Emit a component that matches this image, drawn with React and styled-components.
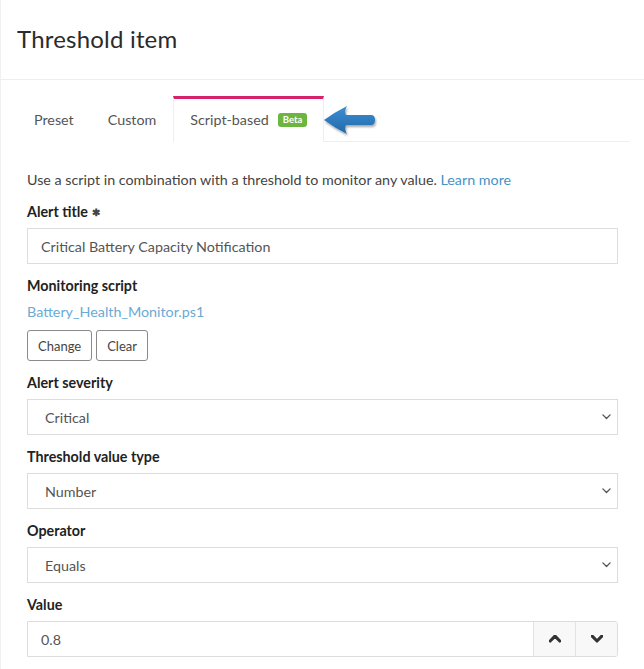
import React from "react";
import styled, { createGlobalStyle } from "styled-components";

const Global = createGlobalStyle`
  html, body { margin: 0; padding: 0; background: #fff; }
  body { font-family: "Lato", "Open Sans", sans-serif; color: #333; }
  * { box-sizing: border-box; }
`;

const Page = styled.div`
  width: 644px;
  height: 669px;
  border-left: 1px solid #f1f1f1;
  overflow: hidden;
  display: flex;
  flex-direction: column;
`;

const Header = styled.header`
  height: 82px;
  border-bottom: 1px solid #eeeeee;
  padding: 24px 16px 0 16px;
`;

const Title = styled.h1`
  margin: 0;
  font-size: 24px;
  font-weight: 400;
  line-height: 30px;
  color: #2b2b2b;
  letter-spacing: 0.2px;
`;

const Body = styled.div`
  padding: 16px 15px 0 16px;
`;

const TabList = styled.div`
  display: flex;
  align-items: stretch;
  border-bottom: 1px solid #eeeeee;
  height: 46px;
`;

const Tab = styled.div`
  position: relative;
  display: flex;
  align-items: center;
  gap: 9px;
  padding: 0 16px 2px 16px;
  font-size: 14.3px;
  color: #555;
  border-top: 3px solid ${(p) => (p.$active ? "#d6216b" : "transparent")};
  border-left: 1px solid ${(p) => (p.$active ? "#eeeeee" : "transparent")};
  border-right: 1px solid ${(p) => (p.$active ? "#eeeeee" : "transparent")};
  margin-bottom: -1px;
  background: #fff;
`;

const Badge = styled.span`
  display: inline-block;
  background: #6cb53f;
  color: #fff;
  font-size: 9.5px;
  font-weight: 700;
  line-height: 14px;
  padding: 0 5px;
  border-radius: 3px;
`;

const Arrow = styled.svg`
  position: absolute;
  left: 100%;
  top: 5px;
  overflow: visible;
`;

const Content = styled.div`
  padding: 28px 11px 0 10px;
  display: flex;
  flex-direction: column;
`;

const Description = styled.p`
  margin: 0 0 12px;
  font-size: 14.3px;
  line-height: 20px;
  color: #444;
`;

const Link = styled.a`
  color: ${(p) => (p.$light ? "#6aaad5" : "#4593c5")};
  text-decoration: none;
  cursor: pointer;
`;

const Field = styled.div`
  display: flex;
  flex-direction: column;
  margin-bottom: 12px;
`;

const Label = styled.div`
  font-size: 14.3px;
  font-weight: 700;
  line-height: 20px;
  color: #222;
  margin-bottom: 6px;
  display: flex;
  align-items: center;
  gap: 4px;
`;

const Req = styled.span`
  font-size: 10px;
  color: #444;
`;

const TextInput = styled.div`
  height: 36px;
  border: 1px solid #dddddd;
  display: flex;
  align-items: center;
  padding-left: 13px;
  font-size: 14.3px;
  color: #555;
  background: #fff;
`;

const FileName = styled.div`
  font-size: 14.3px;
  line-height: 20px;
  margin-bottom: 8px;
`;

const ButtonRow = styled.div`
  display: flex;
  gap: 4px;
`;

const Button = styled.button`
  height: 31px;
  padding: 0 10px;
  font-family: inherit;
  font-size: 13px;
  color: #444;
  background: #fff;
  border: 1px solid #8a8a8a;
  border-radius: 3px;
`;

const SelectBox = styled.div`
  position: relative;
  height: 36px;
  border: 1px solid #dddddd;
  display: flex;
  align-items: center;
  justify-content: space-between;
  padding: 0 6px 0 17px;
  font-size: 14.3px;
  color: #555;
  background: #fff;
`;

const NumberBox = styled.div`
  display: flex;
  height: 36px;
  border: 1px solid #dddddd;
  border-radius: 0 3px 3px 0;
  overflow: hidden;
`;

const NumberValue = styled.div`
  flex: 1;
  display: flex;
  align-items: center;
  padding-left: 13px;
  font-size: 14.3px;
  color: #555;
`;

const SpinButton = styled.div`
  width: 42px;
  display: flex;
  align-items: center;
  justify-content: center;
  background: #f8f8f8;
  border-left: 1px solid #e2e2e2;
  color: #333;
`;

const Chevron = ({ up, size = 10, stroke = 1.6, color = "#666" }) => (
  <svg width={size} height={size * 0.6} viewBox="0 0 10 6">
    <path
      d={up ? "M1 5 L5 1 L9 5" : "M1 1 L5 5 L9 1"}
      fill="none"
      stroke={color}
      strokeWidth={stroke}
      strokeLinecap="round"
      strokeLinejoin="round"
    />
  </svg>
);

const Select = ({ value }) => (
  <SelectBox>
    <span>{value}</span>
    <Chevron size={9} stroke={1.5} color="#555" />
  </SelectBox>
);

export default function App() {
  return (
    <>
      <Global />
      <Page>
        <Header>
          <Title>Threshold item</Title>
        </Header>
        <Body>
          <TabList>
            <Tab>Preset</Tab>
            <Tab>Custom</Tab>
            <Tab $active>
              Script-based <Badge>Beta</Badge>
              <Arrow width="54" height="32" viewBox="0 0 54 32">
                <defs>
                  <filter id="sh" x="-20%" y="-20%" width="140%" height="160%">
                    <feDropShadow dx="1" dy="2" stdDeviation="1.2" floodColor="#000" floodOpacity="0.35" />
                  </filter>
                  <linearGradient id="ag" x1="0" y1="0" x2="0" y2="1">
                    <stop offset="0" stopColor="#3a8fd3" />
                    <stop offset="1" stopColor="#2469a8" />
                  </linearGradient>
                </defs>
                <path
                  d="M1 16 Q12 8 24 2 Q21 7 23 11 L48 11 Q52 11 52 16 Q52 21 48 21 L23 21 Q21 25 24 30 Q12 24 1 16 Z"
                  fill="url(#ag)"
                  filter="url(#sh)"
                />
              </Arrow>
            </Tab>
          </TabList>
          <Content>
            <Description>
              Use a script in combination with a threshold to monitor any value.{" "}
              <Link>Learn more</Link>
            </Description>
            <Field>
              <Label>
                Alert title <Req>✱</Req>
              </Label>
              <TextInput>Critical Battery Capacity Notification</TextInput>
            </Field>
            <Field>
              <Label>Monitoring script</Label>
              <FileName>
                <Link $light>Battery_Health_Monitor.ps1</Link>
              </FileName>
              <ButtonRow>
                <Button>Change</Button>
                <Button>Clear</Button>
              </ButtonRow>
            </Field>
            <Field>
              <Label>Alert severity</Label>
              <Select value="Critical" />
            </Field>
            <Field>
              <Label>Threshold value type</Label>
              <Select value="Number" />
            </Field>
            <Field>
              <Label>Operator</Label>
              <Select value="Equals" />
            </Field>
            <Field>
              <Label>Value</Label>
              <NumberBox>
                <NumberValue>0.8</NumberValue>
                <SpinButton>
                  <Chevron up size={12} stroke={2.6} color="#333" />
                </SpinButton>
                <SpinButton>
                  <Chevron size={12} stroke={2.6} color="#333" />
                </SpinButton>
              </NumberBox>
            </Field>
          </Content>
        </Body>
      </Page>
    </>
  );
}
